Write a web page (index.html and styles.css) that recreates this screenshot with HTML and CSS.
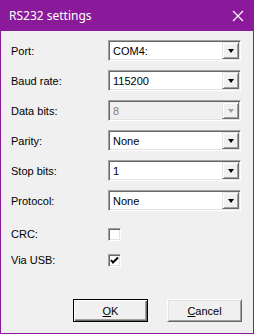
FILE: index.html
```html
<!DOCTYPE html>
<html lang="en">
<head>
  <meta charset="UTF-8" />
  <title>RS232 settings</title>
  <link rel="stylesheet" href="styles.css">
</head>
<body>
  <div class="window">
    <div class="titlebar">
      <span class="title">RS232 settings</span>
      <svg class="close" width="12" height="12" viewBox="0 0 12 12">
        <path d="M1 1 L11 11 M11 1 L1 11" stroke="#fff" stroke-width="1.2" fill="none" />
      </svg>
    </div>

    <div class="content">
      <div class="form">
        <label>Port:</label>
        <div class="combo"><span class="value">COM4:</span><span class="drop"><i class="arrow"></i></span></div>

        <label>Baud rate:</label>
        <div class="combo"><span class="value">115200</span><span class="drop"><i class="arrow"></i></span></div>

        <label>Data bits:</label>
        <div class="combo disabled"><span class="value">8</span><span class="drop"><i class="arrow"></i></span></div>

        <label>Parity:</label>
        <div class="combo"><span class="value">None</span><span class="drop"><i class="arrow"></i></span></div>

        <label>Stop bits:</label>
        <div class="combo"><span class="value">1</span><span class="drop"><i class="arrow"></i></span></div>

        <label>Protocol:</label>
        <div class="combo"><span class="value">None</span><span class="drop"><i class="arrow"></i></span></div>
      </div>

      <div class="checks">
        <label>CRC:</label>
        <span class="checkbox"></span>

        <label>Via USB:</label>
        <span class="checkbox">
          <svg width="9" height="9" viewBox="0 0 9 9">
            <path d="M1 4 L3 6.5 L8 1.5" stroke="#000" stroke-width="2" fill="none" />
          </svg>
        </span>
      </div>

      <div class="buttons">
        <div class="btn default"><u>O</u>K</div>
        <div class="btn"><u>C</u>ancel</div>
      </div>
    </div>
  </div>
</body>
</html>
```

FILE: styles.css
```css
html, body {
  margin: 0;
  padding: 0;
}
body {
  width: 254px;
  height: 334px;
  font-family: 'Liberation Sans', Arial, sans-serif;
  font-size: 11px;
  color: #000;
}
.window {
  width: 254px;
  height: 334px;
  box-sizing: border-box;
  border: 1px solid #8a1a9a;
  border-top: none;
  background: #f0f0f0;
  display: flex;
  flex-direction: column;
}
.titlebar {
  height: 31px;
  margin: 0 -1px;
  background: #8a1a9a;
  display: flex;
  align-items: center;
  justify-content: space-between;
  padding: 0 10px 0 9px;
  flex-shrink: 0;
}
.title {
  color: #fff;
  font-family: 'Noto Sans', 'Open Sans', sans-serif;
  font-size: 12px;
}
.close {
  display: block;
}
.content {
  flex: 1;
  display: flex;
  flex-direction: column;
  padding: 9px 11px 0 10px;
}
.form {
  display: grid;
  grid-template-columns: 97px 133px;
  grid-auto-rows: 21px;
  row-gap: 9px;
  align-items: center;
}
.combo {
  height: 21px;
  box-sizing: border-box;
  background: #fff;
  border-top: 1px solid #a0a0a0;
  border-left: 1px solid #a0a0a0;
  border-right: 1px solid #fff;
  border-bottom: 1px solid #fff;
  box-shadow: inset 1px 1px 0 #696969, inset -1px -1px 0 #e3e3e3;
  display: flex;
  align-items: center;
  padding: 1px;
}
.combo .value {
  flex: 1;
  padding-left: 3px;
}
.drop {
  width: 17px;
  height: 17px;
  box-sizing: border-box;
  background: #f0f0f0;
  border-top: 1px solid #e3e3e3;
  border-left: 1px solid #e3e3e3;
  border-right: 1px solid #696969;
  border-bottom: 1px solid #696969;
  box-shadow: inset 1px 1px 0 #fff, inset -1px -1px 0 #a0a0a0;
  display: flex;
  align-items: center;
  justify-content: center;
}
.arrow {
  width: 0;
  height: 0;
  border-left: 3.5px solid transparent;
  border-right: 3.5px solid transparent;
  border-top: 4px solid #000;
}
.combo.disabled {
  background: #f0f0f0;
  color: #838383;
}
.combo.disabled .arrow {
  border-top-color: #a0a0a0;
}
.checks {
  margin-top: 17px;
  display: grid;
  grid-template-columns: 97px 13px;
  grid-auto-rows: 13px;
  row-gap: 13px;
  align-items: center;
}
.checks label {
  line-height: 13px;
}
.checkbox {
  width: 13px;
  height: 13px;
  box-sizing: border-box;
  background: #fff;
  border-top: 1px solid #a0a0a0;
  border-left: 1px solid #a0a0a0;
  border-right: 1px solid #fff;
  border-bottom: 1px solid #fff;
  box-shadow: inset 1px 1px 0 #696969, inset -1px -1px 0 #e3e3e3;
  display: flex;
  align-items: center;
  justify-content: center;
}
.checkbox svg {
  display: block;
}
.buttons {
  margin-top: auto;
  margin-bottom: 11px;
  display: flex;
  justify-content: flex-end;
  gap: 19px;
}
.btn {
  width: 75px;
  height: 23px;
  box-sizing: border-box;
  background: #f0f0f0;
  border-top: 1px solid #fff;
  border-left: 1px solid #fff;
  border-right: 1px solid #696969;
  border-bottom: 1px solid #696969;
  box-shadow: inset 1px 1px 0 #e3e3e3, inset -1px -1px 0 #a0a0a0;
  display: flex;
  align-items: center;
  justify-content: center;
}
.btn.default {
  border: 1px solid #000;
  box-shadow: inset 1px 1px 0 #fff, inset -1px -1px 0 #696969, inset -2px -2px 0 #a0a0a0;
}
```
